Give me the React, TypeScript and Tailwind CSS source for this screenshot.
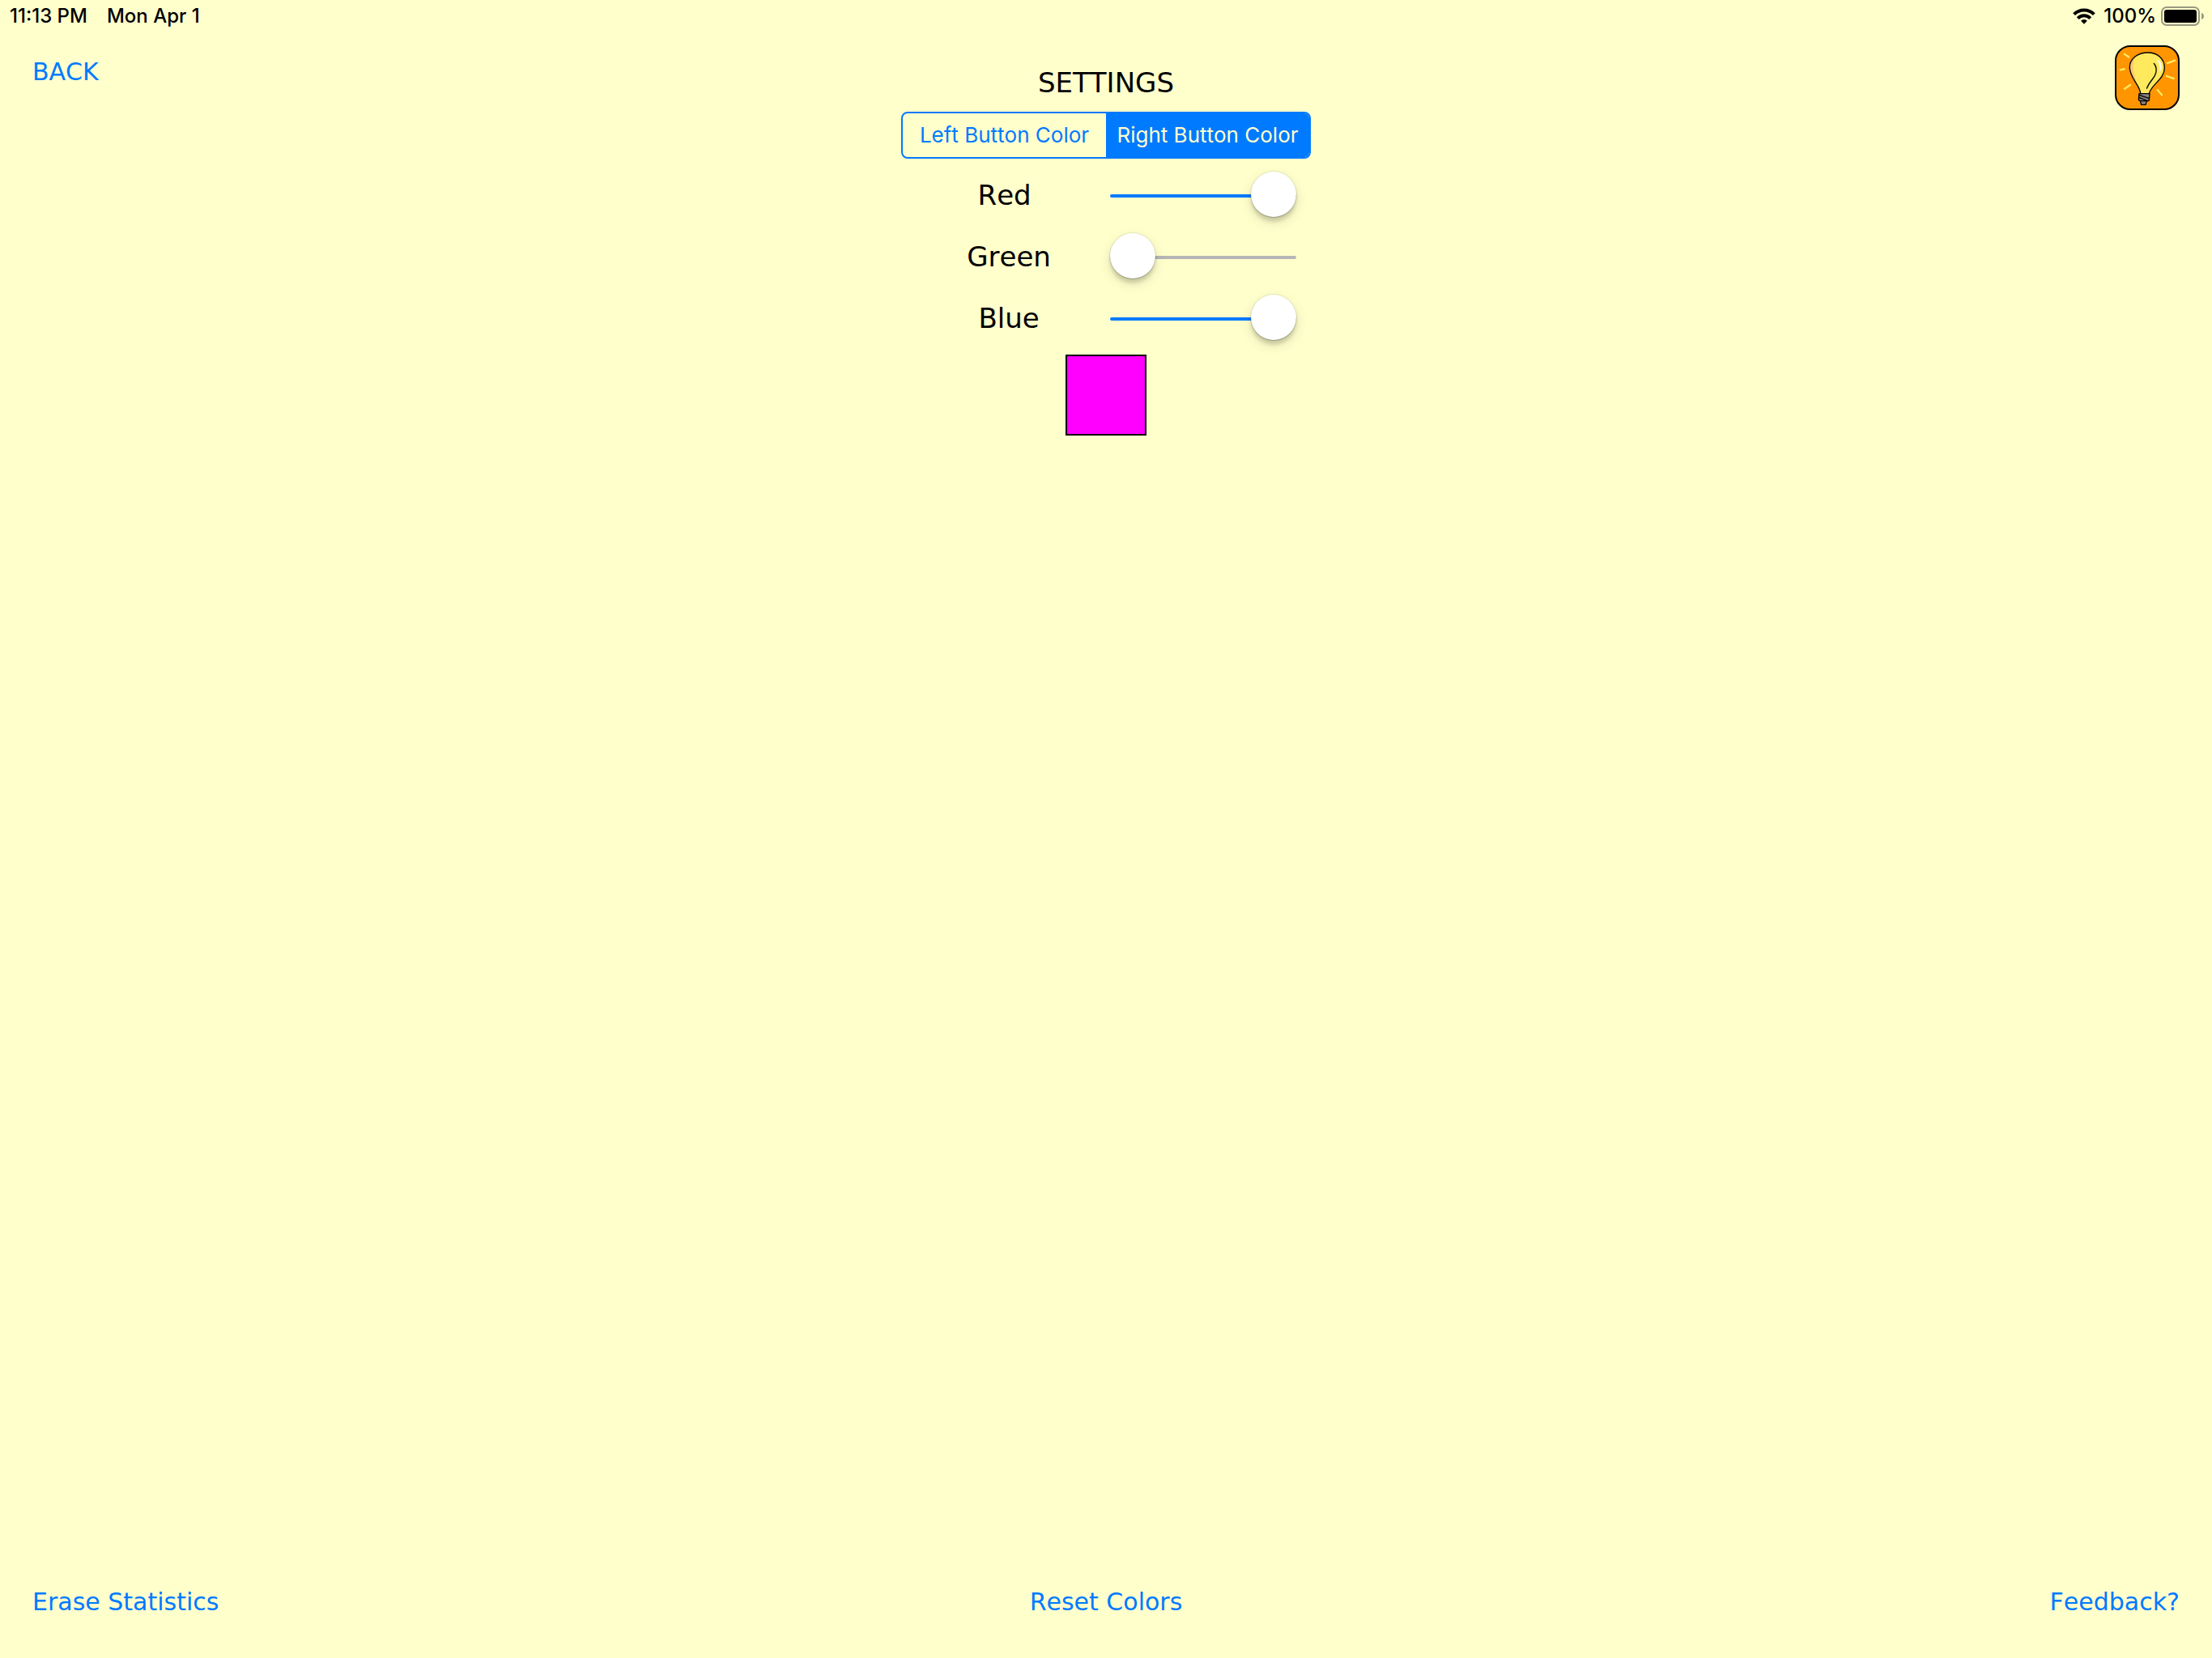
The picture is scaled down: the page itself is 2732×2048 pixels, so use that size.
import { useState } from "react";

type Channel = "red" | "green" | "blue";
type Rgb = Record<Channel, number>;
type Side = "left" | "right";

const channels: { id: Channel; label: string }[] = [
  { id: "red", label: "Red " },
  { id: "green", label: "Green" },
  { id: "blue", label: "Blue" },
];

const defaults: Record<Side, Rgb> = {
  left: { red: 0, green: 255, blue: 0 },
  right: { red: 255, green: 0, blue: 255 },
};

function WifiIcon() {
  return (
    <svg className="h-5 w-7" viewBox="0 0 28 20" fill="none" stroke="#000" strokeWidth="4" aria-hidden="true">
      <path d="M1.6 7.6a17.6 17.6 0 0 1 24.8 0" />
      <path d="M6.2 12.6a11 11 0 0 1 15.6 0" />
      <path d="M14 19.8l-3.900-4.100a5.600 5.600 0 0 1 7.800 0z" fill="#000" stroke="none" />
    </svg>
  );
}

function BatteryIcon() {
  return (
    <svg className="h-6 w-[53px]" viewBox="0 0 53 24" aria-hidden="true">
      <rect x="1" y="1" width="46" height="22" rx="6" fill="none" stroke="#999980" strokeWidth="2" />
      <rect x="4" y="4" width="40" height="16" rx="3" fill="#000" />
      <path d="M50 8c2 .6 3 2.200 3 4s-1 3.400-3 4z" fill="#999980" />
    </svg>
  );
}

function BulbLogo() {
  return (
    <svg className="size-20" viewBox="0 0 240 240" aria-hidden="true">
      <rect x="3" y="3" width="234" height="234" rx="54" fill="#ff9500" stroke="#000" strokeWidth="6" />
      <g stroke="#ffe95c" strokeWidth="7">
        <path d="M33 31l21 14M18 92l20-5M34 163l26-18M192 67l33-12M189 113l32 11M156 163l20 23" />
      </g>
      <path
        d="M95 178C93 146 55 122 55 82c0-33 30-55 67-55s62 23 62 57c0 41-48 60-57 94z"
        fill="#ffe95c"
      />
      <path d="M83 143C66 121 55 106 55 82c0-18 9-33 23-43-7 14-11 26-10 44 1 22 8 40 15 60z" fill="#ffc873" />
      <path d="M156 54c12 2 18 14 17 28-1 8-3 13-6 16 1-16-1-31-11-44z" fill="#fff" />
      <path
        d="M95 178C93 146 55 122 55 82c0-33 30-55 67-55s62 23 62 57c0 41-48 60-57 94"
        fill="none"
        stroke="#000"
        strokeWidth="4"
      />
      <path d="M144 66c10 10 13 28 5 44-8 17-24 29-31 51" fill="none" stroke="#000" strokeWidth="4" />
      <path d="M90 179h39l-2 25-9 3-4 13H98l-4-14-6-4z" fill="#87827f" stroke="#000" strokeWidth="4" />
      <path d="M90 184l36 12M89 193l30 12M94 206h24" fill="none" stroke="#000" strokeWidth="4" />
    </svg>
  );
}

function ColorSlider({
  id,
  label,
  value,
  onChange,
}: {
  id: string;
  label: string;
  value: number;
  onChange: (value: number) => void;
}) {
  const fill = Math.round((value / 255) * 100);
  return (
    <div className="grid h-19 grid-cols-[1fr_230px] items-center pr-[18px] pl-2">
      <label htmlFor={id} className="pb-0.5 text-center text-[34px] leading-10 whitespace-pre">
        {label}
      </label>
      <input
        id={id}
        type="range"
        min={0}
        max={255}
        value={value}
        onChange={(event) => onChange(Number(event.target.value))}
        style={{ backgroundImage: `linear-gradient(to right, #007aff ${fill}%, #b6b6b8 ${fill}%)` }}
        className="h-1 w-full cursor-pointer appearance-none rounded-full [&::-webkit-slider-runnable-track]:h-1 [&::-webkit-slider-thumb]:-mt-7 [&::-webkit-slider-thumb]:size-14 [&::-webkit-slider-thumb]:appearance-none [&::-webkit-slider-thumb]:rounded-full [&::-webkit-slider-thumb]:bg-white [&::-webkit-slider-thumb]:shadow-[0_0_1px_1px_rgba(0,0,0,0.08),0_1px_1px_rgba(0,0,0,0.16),0_6px_4px_rgba(0,0,0,0.13),0_6px_16px_rgba(0,0,0,0.12)]"
      />
    </div>
  );
}

export default function App() {
  const [side, setSide] = useState<Side>("right");
  const [colors, setColors] = useState(defaults);
  const color = colors[side];

  const tabs: { id: Side; label: string }[] = [
    { id: "left", label: "Left Button Color" },
    { id: "right", label: "Right Button Color" },
  ];

  return (
    <div className="flex min-h-screen flex-col bg-[#ffffcc] font-['DejaVu_Sans',Verdana,sans-serif] text-black [font-kerning:none]">
      <header className="flex h-10 items-center justify-between pr-2.5 pl-3 font-[Inter,sans-serif] text-[24px] leading-8 font-medium">
        <div className="flex gap-6">
          <span>11:13 PM</span>
          <span>Mon Apr 1</span>
        </div>
        <div className="flex items-center">
          <WifiIcon />
          <span className="mr-1.5 ml-2.5">100%</span>
          <BatteryIcon />
        </div>
      </header>

      <main className="grid grow grid-cols-[1fr_506px_1fr] items-start px-10 pt-4">
        <button type="button" className="mt-[15px] cursor-pointer justify-self-start text-[30px] leading-9 text-[#007aff]">
          BACK
        </button>

        <section className="flex flex-col pt-[26px]">
          <h1 className="text-center text-[34px] leading-10">SETTINGS</h1>

          <div
            role="group"
            aria-label="Button to color"
            className="mt-4 grid h-[58px] grid-cols-2 overflow-hidden rounded-lg border-2 border-[#007aff] font-[Inter,sans-serif] text-[26px] leading-8"
          >
            {tabs.map((tab) => (
              <button
                key={tab.id}
                type="button"
                aria-pressed={side === tab.id}
                onClick={() => setSide(tab.id)}
                className="cursor-pointer whitespace-nowrap text-[#007aff] aria-pressed:bg-[#007aff] aria-pressed:text-[#ffffcc]"
              >
                {tab.label}
              </button>
            ))}
          </div>

          <div className="mt-2">
            {channels.map(({ id, label }) => (
              <ColorSlider
                key={id}
                id={id}
                label={label}
                value={color[id]}
                onChange={(value) => setColors({ ...colors, [side]: { ...color, [id]: value } })}
              />
            ))}
          </div>

          <div
            className="mt-1.5 size-25 self-center border-2 border-black"
            style={{ backgroundColor: `rgb(${color.red}, ${color.green}, ${color.blue})` }}
          />
        </section>

        <button type="button" aria-label="Hints" className="cursor-pointer justify-self-end">
          <BulbLogo />
        </button>
      </main>

      <footer className="grid grid-cols-3 px-10 pb-[51px] text-[30px] leading-9 text-[#007aff]">
        <button type="button" className="cursor-pointer justify-self-start">
          Erase Statistics
        </button>
        <button type="button" className="cursor-pointer justify-self-center" onClick={() => setColors(defaults)}>
          Reset Colors
        </button>
        <button type="button" className="cursor-pointer justify-self-end">
          Feedback?
        </button>
      </footer>
    </div>
  );
}
